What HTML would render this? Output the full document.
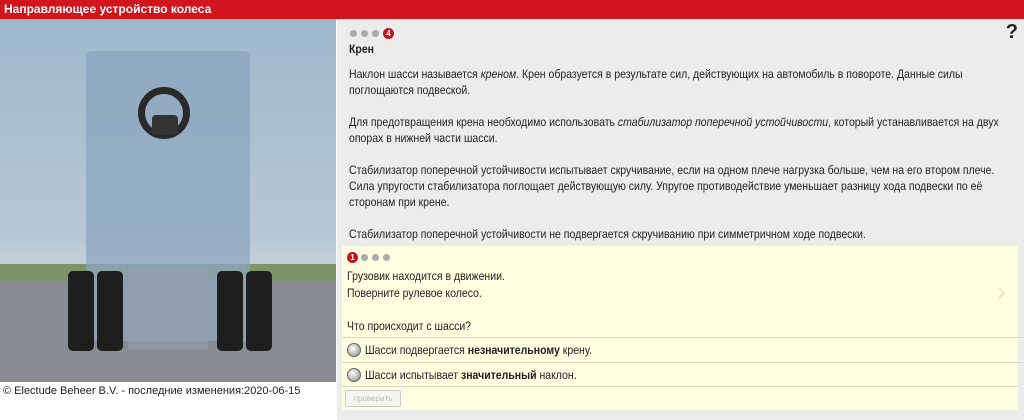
<!DOCTYPE html>
<html><head><meta charset="utf-8"><style>
body{margin:0;width:1024px;height:420px;overflow:hidden;background:#fff;font-family:"Liberation Sans",sans-serif;font-size:12px;color:#222;position:relative}
.hdr{position:absolute;left:0;top:0;width:1024px;height:19px;background:#d2141c;color:#fff;font-weight:bold;font-size:12px;line-height:19px;padding-left:4px;box-sizing:border-box}
.img{position:absolute;left:0;top:19px;width:336px;height:363px;background:linear-gradient(#9fb8cc,#b6c8d6 60%,#c6d2da 68%);overflow:hidden}
.grass{position:absolute;left:0;top:245px;width:336px;height:30px;background:#7f936a}
.road{position:absolute;left:0;top:262px;width:336px;height:110px;background:#8a8c93}
.cab{position:absolute;left:86px;top:32px;width:164px;height:290px;background:rgba(140,165,190,.75);border-radius:6px 6px 0 0}
.whl{position:absolute;top:252px;width:26px;height:80px;background:#1e1e1e;border-radius:5px}
.foot{position:absolute;left:3px;top:385px;font-size:11px;color:#222}
.panel{position:absolute;left:337px;top:19px;width:687px;height:401px;background:#ececec}
.dots{position:absolute;left:13px;top:7px}
.d{display:inline-block;width:7px;height:7px;border-radius:50%;background:#aaa;margin-right:4px;vertical-align:middle}
.n{display:inline-block;width:11px;height:11px;border-radius:50%;background:#c0141c;color:#fff;font-size:8px;font-weight:bold;text-align:center;line-height:11px;vertical-align:middle}
.sx{transform:scaleX(.875);transform-origin:0 0}
.txt{position:absolute;left:12px;top:22px;width:752px;line-height:16px}
.txt p{margin:0 0 16px}
.q{position:absolute;left:5px;top:227px;width:676px;height:164px;background:#fefee0}
.row{position:absolute;left:0;width:676px;border-top:1px solid #dcdcc0}
.rb{display:inline-block;width:12px;height:12px;border-radius:50%;background:radial-gradient(circle at 40% 35%,#fff,#aaa 70%,#777);border:1px solid #666;vertical-align:-3px;margin-right:4px}
.btn{position:absolute;left:3px;top:144px;width:54px;height:15px;border:1px solid #ccc;border-radius:2px;background:#f6f6f0;color:#bbb;font-size:8px;text-align:center;line-height:15px}
</style></head><body>
<div class="hdr">Направляющее устройство колеса</div>
<div class="img">
<div class="grass"></div><div class="road"></div>
<div class="cab"></div>
<div style="position:absolute;left:128px;top:250px;width:80px;height:80px;background:rgba(150,160,175,.6)"></div>
<div class="whl" style="left:68px"></div><div class="whl" style="left:97px"></div>
<div class="whl" style="left:217px"></div><div class="whl" style="left:246px"></div>
<div style="position:absolute;left:138px;top:68px;width:52px;height:52px;border:7px solid #2a2a2a;border-radius:50%;box-sizing:border-box"></div>
<div style="position:absolute;left:152px;top:96px;width:26px;height:20px;background:#333;border-radius:4px"></div>
</div>
<div class="foot">© Electude Beheer B.V. - последние изменения:2020-06-15</div>
<div class="panel">
<div class="dots"><span class="d"></span><span class="d"></span><span class="d"></span><span class="n">4</span></div>
<div style="position:absolute;right:6px;top:2px;font-size:20px;font-weight:bold">?</div>
<div class="txt sx"><div style="height:25px;line-height:16px"><b>Крен</b></div>
<p>Наклон шасси называется <i>креном</i>. Крен образуется в результате сил, действующих на автомобиль в повороте. Данные силы поглощаются подвеской.</p>
<p>Для предотвращения крена необходимо использовать <i>стабилизатор поперечной устойчивости</i>, который устанавливается на двух опорах в нижней части шасси.</p>
<p>Стабилизатор поперечной устойчивости испытывает скручивание, если на одном плече нагрузка больше, чем на его втором плече. Сила упругости стабилизатора поглощает действующую силу. Упругое противодействие уменьшает разницу хода подвески по её сторонам при крене.</p>
<p>Стабилизатор поперечной устойчивости не подвергается скручиванию при симметричном ходе подвески.</p></div>
<div class="q">
<div style="position:absolute;left:5px;top:4px"><span class="n">1</span> <span class="d"></span><span class="d"></span><span class="d"></span></div>
<div class="sx" style="position:absolute;left:5px;top:22px;line-height:16.5px;white-space:nowrap">Грузовик находится в движении.<br>Поверните рулевое колесо.<br><br>Что происходит с шасси?</div>
<div style="position:absolute;right:12px;top:30px;color:#e4e4cc;font-size:26px">›</div>
<div class="row" style="top:91px;height:24px;line-height:25px;padding-left:5px"><span class="rb"></span><span class="sx" style="display:inline-block;white-space:nowrap">Шасси подвергается <b>незначительному</b> крену.</span></div>
<div class="row" style="top:116px;height:24px;line-height:25px;padding-left:5px"><span class="rb"></span><span class="sx" style="display:inline-block;white-space:nowrap">Шасси испытывает <b>значительный</b> наклон.</span></div>
<div class="row" style="top:140px;height:0"></div>
<div class="btn">проверить</div>
</div>
</div>
</body></html>
